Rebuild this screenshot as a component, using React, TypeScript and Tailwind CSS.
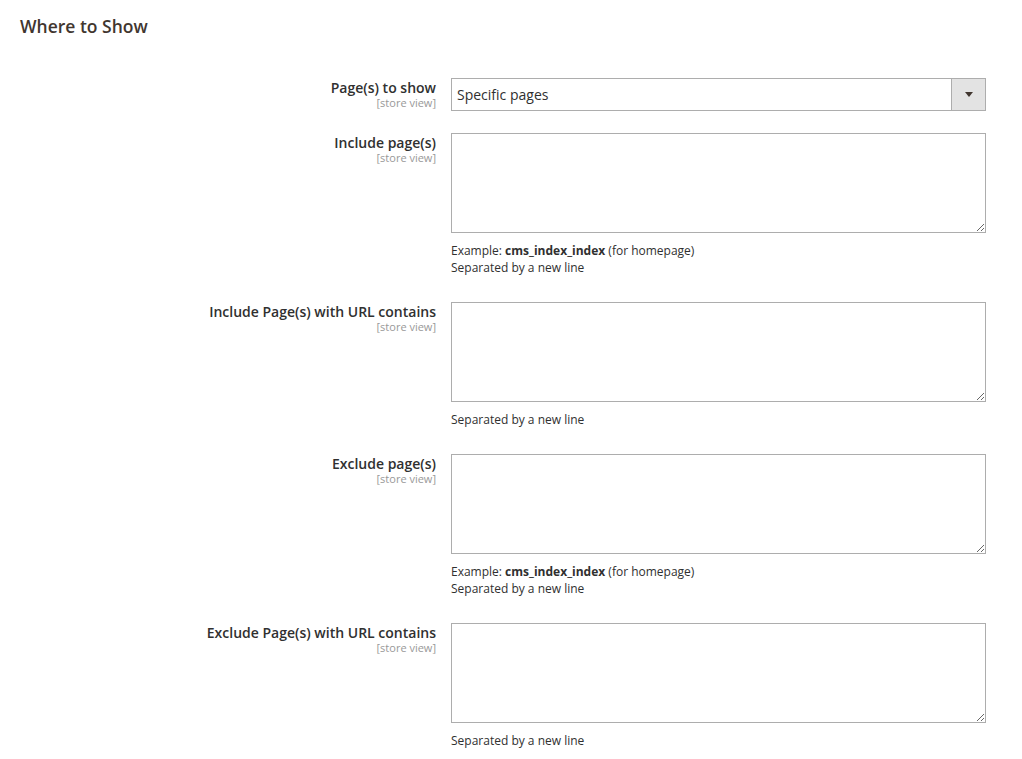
const font = "font-['Open_Sans','Liberation_Sans',sans-serif]";

interface FieldProps {
  label: string;
  notes?: React.ReactNode[];
}

function Label({ label }: { label: string }) {
  return (
    <div className="w-[451px] shrink-0 pr-[15px] pt-px text-right">
      <div className="text-[14px] leading-[18px] font-semibold text-[#303030]">{label}</div>
      <div className="text-[11px] leading-[11px] text-[#999]">[store view]</div>
    </div>
  );
}

function TextareaField({ label, notes = [] }: FieldProps) {
  return (
    <div className="flex mb-[26px]">
      <Label label={label} />
      <div className="w-[535px]">
        <textarea className="block w-full h-[100px] border border-[#adadad] bg-white outline-none resize-y" />
        <div className="mt-[9px] text-[12px] leading-[17px] text-[#303030]">
          {notes.map((n, i) => (
            <div key={i}>{n}</div>
          ))}
        </div>
      </div>
    </div>
  );
}

const example = (
  <>
    Example: <span className="font-bold">cms_index_index</span> (for homepage)
  </>
);

export default function App() {
  return (
    <div className={`${font} min-h-screen bg-white`}>
      <h2 className="px-5 pt-[14px] text-[17.5px] leading-[24px] font-semibold text-[#41362f]">
        Where to Show
      </h2>

      <div className="mt-[40px]">
        <div className="flex mb-[22px]">
          <Label label="Page(s) to show" />
          <div className="w-[535px] h-[33px] flex border border-[#adadad] bg-white">
            <div className="flex-1 flex items-center pl-[5px] text-[14px] text-[#303030]">
              Specific pages
            </div>
            <div className="w-[34px] flex items-center justify-center bg-[#e3e3e3] border-l border-[#adadad]">
              <svg width="8" height="5" viewBox="0 0 8 5">
                <path d="M0 0h8L4 5z" fill="#41362f" />
              </svg>
            </div>
          </div>
        </div>

        <TextareaField label="Include page(s)" notes={[example, 'Separated by a new line']} />
        <TextareaField label="Include Page(s) with URL contains" notes={['Separated by a new line']} />
        <TextareaField label="Exclude page(s)" notes={[example, 'Separated by a new line']} />
        <TextareaField label="Exclude Page(s) with URL contains" notes={['Separated by a new line']} />
      </div>
    </div>
  );
}
